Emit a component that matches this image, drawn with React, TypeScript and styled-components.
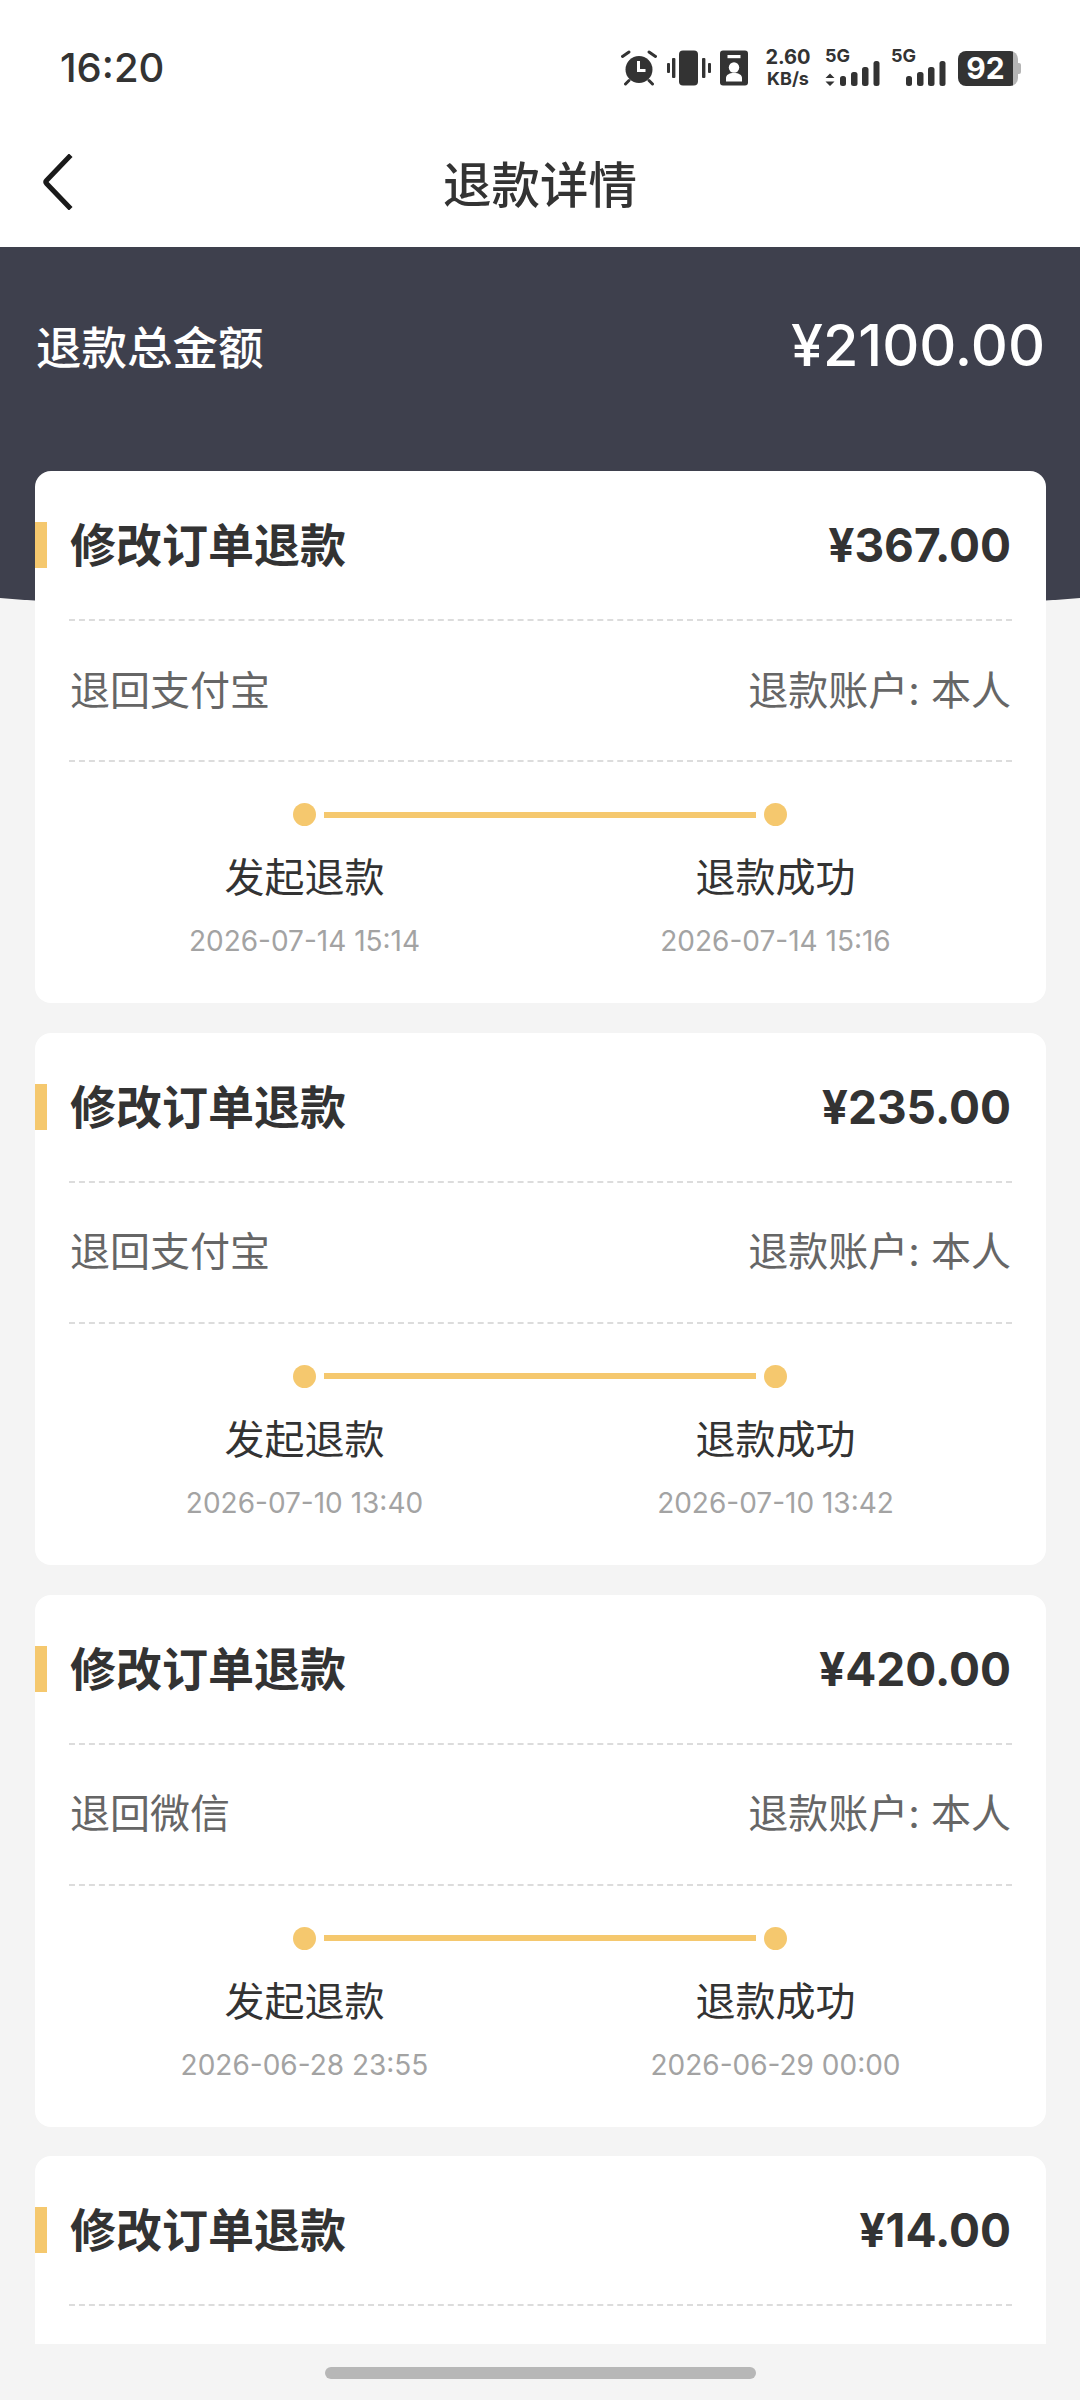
import styled, { createGlobalStyle } from 'styled-components';

interface Refund {
  amount: string;
  channel?: string;
  startedAt?: string;
  finishedAt?: string;
}

const refunds: Refund[] = [
  { amount: '¥367.00', channel: '退回支付宝', startedAt: '2026-07-14 15:14', finishedAt: '2026-07-14 15:16' },
  { amount: '¥235.00', channel: '退回支付宝', startedAt: '2026-07-10 13:40', finishedAt: '2026-07-10 13:42' },
  { amount: '¥420.00', channel: '退回微信', startedAt: '2026-06-28 23:55', finishedAt: '2026-06-29 00:00' },
  { amount: '¥14.00' },
];

function AlarmIcon() {
  return (
    <svg width="36" height="36" viewBox="0 0 36 36">
      <circle cx="18" cy="19.5" r="13.5" fill="#333" />
      <path d="M17.5 11v9.5h7" fill="none" stroke="#fff" strokeWidth="3" />
      <path d="M1.5 6.5 8 2M34.5 6.5 28 2M4.5 34 8 30.5M31.5 34 28 30.5" stroke="#333" strokeWidth="3" strokeLinecap="round" />
    </svg>
  );
}

function VibrateIcon() {
  return (
    <svg width="45" height="36" viewBox="0 0 45 36" fill="#333">
      <rect x="13" y="0.5" width="19" height="35" rx="4" />
      <rect x="1" y="13" width="3" height="10" rx="1" />
      <rect x="6" y="8" width="3.4" height="20" rx="1" />
      <rect x="36" y="8" width="3.4" height="20" rx="1" />
      <rect x="42" y="13" width="3" height="10" rx="1" />
    </svg>
  );
}

function ContactIcon() {
  return (
    <svg width="28" height="36" viewBox="0 0 28 36">
      <rect y="0.5" width="28" height="35" rx="3" fill="#333" />
      <rect x="7.5" y="5" width="13" height="3.2" fill="#fff" />
      <circle cx="14" cy="17.5" r="5.2" fill="#fff" />
      <path d="M6 31.5v-3.5c0-3 3-5 8-5s8 2 8 5v3.5z" fill="#fff" />
    </svg>
  );
}

function SignalIcon({ arrows }: { arrows?: boolean }) {
  return (
    <svg width="55" height="25" viewBox="0 0 55 25" fill="#333">
      {arrows && <path d="M5 12.5 9.5 17H.5zM5 25 .5 20.5h9z" />}
      <rect x="15" y="15" width="6" height="10" rx="2.5" />
      <rect x="26" y="11" width="6.5" height="14" rx="2.5" />
      <rect x="37" y="6" width="6.5" height="19" rx="2.5" />
      <rect x="48.5" y="0" width="6" height="25" rx="2.5" />
    </svg>
  );
}

export default function App() {
  return (
    <>
      <GlobalStyle />
      <Page>
        <StatusBar>
          <Clock>16:20</Clock>
          <StatusIcons>
            <AlarmIcon />
            <VibrateIcon />
            <ContactIcon />
            <Speed>
              <SpeedValue>2.60</SpeedValue>
              <SpeedUnit>KB/s</SpeedUnit>
            </Speed>
            <Signal>
              <SignalLabel>5G</SignalLabel>
              <SignalIcon arrows />
            </Signal>
            <Signal>
              <SignalLabel>5G</SignalLabel>
              <SignalIcon />
            </Signal>
            <Battery>92</Battery>
          </StatusIcons>
        </StatusBar>

        <NavBar>
          <BackButton>
            <svg width="30" height="56" viewBox="0 0 30 56" fill="none">
              <path d="M26 3 3.5 26.5a2.2 2.2 0 0 0 0 3L26 53" stroke="#1a1a1a" strokeWidth="5" strokeLinecap="square" />
            </svg>
          </BackButton>
          <NavTitle>退款详情</NavTitle>
        </NavBar>

        <Content>
          <Hero>
            <HeroLabel>退款总金额</HeroLabel>
            <HeroAmount>¥2100.00</HeroAmount>
          </Hero>

          <CardList>
            {refunds.map((refund) => (
              <Card key={refund.amount}>
                <CardHeader>
                  <AccentBar />
                  <CardTitle>修改订单退款</CardTitle>
                  <CardAmount>{refund.amount}</CardAmount>
                </CardHeader>
                <Divider />
                {refund.channel && (
                  <>
                    <InfoRow>
                      <span>{refund.channel}</span>
                      <span>退款账户: 本人</span>
                    </InfoRow>
                    <Divider />
                    <Track>
                      <Dot />
                      <TrackLine />
                      <Dot />
                    </Track>
                    <Steps>
                      <Step>
                        <StepName>发起退款</StepName>
                        <StepTime>{refund.startedAt}</StepTime>
                      </Step>
                      <Step>
                        <StepName>退款成功</StepName>
                        <StepTime>{refund.finishedAt}</StepTime>
                      </Step>
                    </Steps>
                  </>
                )}
              </Card>
            ))}
          </CardList>
        </Content>

        <Footer>
          <HomeIndicator />
        </Footer>
      </Page>
    </>
  );
}

const GlobalStyle = createGlobalStyle`
  html, body {
    margin: 0;
    padding: 0;
    background: #f4f4f4;
  }
  * {
    box-sizing: border-box;
  }
`;

const Page = styled.div`
  display: flex;
  flex-direction: column;
  height: 2400px;
  overflow: hidden;
  background: #f4f4f4;
  color: #333;
  font-family: Inter, 'Noto Sans CJK SC', sans-serif;
`;

const StatusBar = styled.div`
  display: flex;
  flex: none;
  justify-content: space-between;
  align-items: center;
  height: 110px;
  padding: 26px 62px 0 60px;
  background: #fff;
`;

const Clock = styled.span`
  font-size: 40px;
  font-weight: 500;
  line-height: 1;
`;

const StatusIcons = styled.div`
  display: flex;
  align-items: center;
  gap: 9px;
`;

const Speed = styled.div`
  display: flex;
  flex-direction: column;
  align-items: center;
  width: 46px;
  margin: 0 5px 0 8px;
  font-weight: 700;
`;

const SpeedValue = styled.span`
  font-size: 20px;
  line-height: 21px;
`;

const SpeedUnit = styled.span`
  font-size: 18px;
  line-height: 21px;
`;

const Signal = styled.div`
  display: flex;
  flex-direction: column;
  margin-right: 2px;
`;

const SignalLabel = styled.span`
  height: 11px;
  font-size: 18px;
  font-weight: 700;
  line-height: 11px;
`;

const Battery = styled.div`
  position: relative;
  display: flex;
  justify-content: center;
  align-items: center;
  width: 60px;
  height: 35px;
  margin-left: 1px;
  padding-right: 5px;
  border-radius: 8px;
  background: linear-gradient(to right, #333 92%, #b5b5b5 92%);
  color: #fff;
  font-size: 30px;
  font-weight: 700;

  &::after {
    content: '';
    position: absolute;
    top: 12px;
    right: -3px;
    width: 3px;
    height: 11px;
    border-radius: 0 2px 2px 0;
    background: #b5b5b5;
  }
`;

const NavBar = styled.div`
  position: relative;
  display: flex;
  flex: none;
  justify-content: center;
  align-items: center;
  height: 137px;
  padding-top: 15px;
  background: #fff;
`;

const BackButton = styled.div`
  position: absolute;
  top: 44px;
  left: 43px;
  line-height: 0;
`;

const NavTitle = styled.h1`
  margin: 0;
  color: #333;
  font-size: 48.5px;
  font-weight: 500;
  line-height: 1.2;
`;

const Content = styled.div`
  position: relative;
  flex: 1;
  overflow: hidden;
`;

const Hero = styled.div`
  display: flex;
  justify-content: space-between;
  align-items: center;
  height: 224px;
  padding: 0 35px 24px 36px;
  color: #fff;
  position: relative;

  &::before {
    content: '';
    position: absolute;
    top: 0;
    left: -540px;
    width: 2160px;
    height: 371px;
    border-radius: 0 0 50% 50% / 0 0 150px 150px;
    background: #3e404d;
  }
`;

const HeroLabel = styled.span`
  position: relative;
  margin-top: 3px;
  font-size: 45.5px;
  font-weight: 500;
  line-height: 1;
`;

const HeroAmount = styled.span`
  position: relative;
  margin-bottom: 3px;
  font-size: 57.5px;
  font-weight: 500;
  line-height: 1;
`;

const CardList = styled.div`
  position: relative;
  display: flex;
  flex-direction: column;
  gap: 29.8px;
  padding: 0 34px 0 35px;
`;

const Card = styled.section`
  flex: none;
  height: 532px;
  border-radius: 16px;
  background: #fff;
`;

const CardHeader = styled.header`
  display: flex;
  align-items: center;
  height: 148px;
  padding-right: 35px;
`;

const AccentBar = styled.div`
  flex: none;
  width: 12px;
  height: 46px;
  margin-right: 23px;
  background: #f5c86e;
`;

const CardTitle = styled.h2`
  flex: 1;
  margin: 0;
  font-size: 46px;
  font-weight: 700;
  line-height: 1;
  color: #333;
`;

const CardAmount = styled.span`
  font-size: 46px;
  font-weight: 700;
  line-height: 1;
`;

const Divider = styled.hr`
  height: 0;
  margin: 0 34px;
  border: 0;
  border-top: 2px dashed #dcdcdc;
`;

const InfoRow = styled.div`
  display: flex;
  justify-content: space-between;
  align-items: center;
  height: 139px;
  padding: 0 35px;
  color: #666;
  font-size: 40px;
  line-height: 1;
`;

const Track = styled.div`
  display: flex;
  align-items: center;
  gap: 8px;
  margin-top: 41px;
  padding: 0 259px 0 258px;
`;

const Dot = styled.span`
  flex: none;
  width: 23px;
  height: 23px;
  border-radius: 50%;
  background: #f5c86e;
`;

const TrackLine = styled.span`
  flex: 1;
  height: 6px;
  background: #f5c86e;
`;

const Steps = styled.div`
  display: grid;
  grid-template-columns: 1fr 1fr;
  padding: 0 35px 0 34px;
`;

const Step = styled.div`
  display: flex;
  flex-direction: column;
  align-items: center;
  padding-top: 22px;
`;

const StepName = styled.span`
  color: #333;
  font-size: 40px;
  line-height: 60px;
`;

const StepTime = styled.span`
  margin-top: 8px;
  color: #a3a3a3;
  font-size: 28px;
  line-height: 50px;
`;

const Footer = styled.div`
  display: flex;
  flex: none;
  justify-content: center;
  height: 56px;
  padding-top: 23px;
`;

const HomeIndicator = styled.div`
  width: 431px;
  height: 12px;
  border-radius: 6px;
  background: #b7b7b7;
`;
